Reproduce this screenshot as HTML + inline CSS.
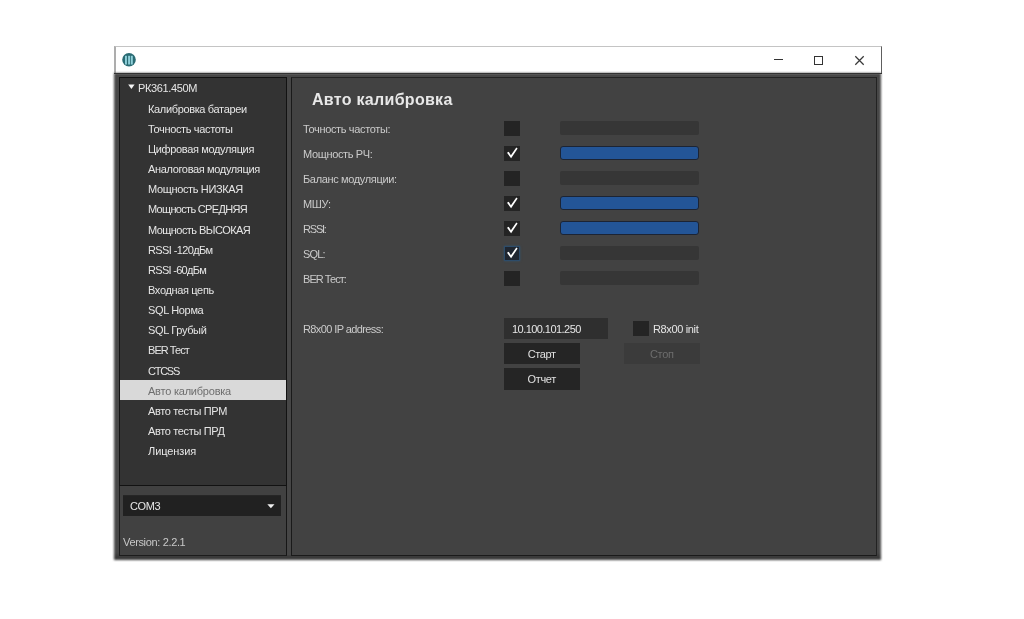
<!DOCTYPE html>
<html><head><meta charset="utf-8">
<style>
*{margin:0;padding:0;box-sizing:border-box}
html,body{width:1024px;height:619px;overflow:hidden;background:#fff;position:relative;font-family:"Liberation Sans",sans-serif}
.a{position:absolute}
.title{left:114px;top:46px;width:768px;height:27px;background:#fff;border-top:1.5px solid #c4c4c4;border-left:2px solid #adadad;border-right:1px solid #5e5e5e}
.frame{left:114px;top:73px;width:767px;height:487px;background:linear-gradient(#474747 0,#474747 480px,#3a3a3a 483px);filter:blur(0.9px)}
.ftop{left:114px;top:73px;width:768px;height:1px;background:#333}
.list{left:119px;top:77px;width:168px;height:409px;background:#333;border:1px solid #121212}
.lower{left:119px;top:486px;width:168px;height:70px;background:#414141;border-left:1px solid #1a1a1a;border-right:1px solid #161616;border-bottom:1px solid #1c1c1c}
.split{left:287px;top:77px;width:4px;height:478px;background:#464646}
.content{left:291px;top:77px;width:586px;height:479px;background:#424242;border-left:1px solid #1a1a1a;border-top:1px solid #242424;border-right:1px solid #222;border-bottom:1px solid #1a1a1a}
.t{color:#e6e6e6;font-size:11px;letter-spacing:-0.35px;white-space:nowrap;line-height:12px}
.item{left:148px}
.sel{left:120px;top:380px;width:166px;height:20px;background:#d9d9d9}
.lbl{left:303px;color:#cbcbcb}
.cb{width:15.5px;height:14.5px;background:#242424;left:504px}
.bar{left:560px;width:139px;height:14px;background:#363636;border-radius:2px}
.bar.f{background:#235597;border:1.5px solid #1c2434;border-radius:3px}
.btn{width:75.5px;height:20.5px;background:#252525;color:#e0e0e0;text-align:center;line-height:23px;font-size:11px;letter-spacing:-0.35px}
</style></head><body><div id="w" style="position:absolute;left:0;top:0;width:1024px;height:619px;will-change:transform">
<div class="a title"></div>
<!-- app icon -->
<svg class="a" style="left:121px;top:52px" width="16" height="16" viewBox="0 0 16 16">
<circle cx="8" cy="7.8" r="6.8" fill="#2a6b73"/>
<rect x="4" y="3.8" width="1.9" height="8.7" fill="#8fd0da"/>
<rect x="7.1" y="3.8" width="1.9" height="8.7" fill="#8fd0da"/>
<rect x="9.8" y="3.8" width="2" height="8.7" fill="#8fd0da"/>
</svg>
<!-- window controls -->
<div class="a" style="left:774px;top:59px;width:9px;height:1px;background:#333"></div>
<div class="a" style="left:814px;top:56px;width:9px;height:9px;border:1px solid #333"></div>
<svg class="a" style="left:854px;top:54.5px" width="11" height="11" viewBox="0 0 11 11"><path d="M1.3 1.3L9.7 9.7M9.7 1.3L1.3 9.7" stroke="#383838" stroke-width="1.25"/></svg>

<div class="a frame"></div>
<div class="a ftop"></div>
<div class="a list"></div>
<div class="a lower"></div>
<div class="a split"></div>
<div class="a content"></div>

<!-- sidebar tree -->
<svg class="a" style="left:128px;top:84px" width="7" height="6" viewBox="0 0 7 6"><path d="M0.2 0.6H6.6L3.4 5.1Z" fill="#f4f4f4"/></svg>
<div class="a t" style="left:138px;top:82px">РК361.450М</div>
<div class="a sel"></div>
<div class="a t item" style="top:102.6px">Калибровка батареи</div>
<div class="a t item" style="top:122.8px">Точность частоты</div>
<div class="a t item" style="top:142.9px">Цифровая модуляция</div>
<div class="a t item" style="top:163.0px">Аналоговая модуляция</div>
<div class="a t item" style="top:183.2px">Мощность НИЗКАЯ</div>
<div class="a t item" style="top:203.3px;letter-spacing:-0.68px">Мощность СРЕДНЯЯ</div>
<div class="a t item" style="top:223.5px;letter-spacing:-0.55px">Мощность ВЫСОКАЯ</div>
<div class="a t item" style="top:243.6px;letter-spacing:-0.62px">RSSI -120дБм</div>
<div class="a t item" style="top:263.8px;letter-spacing:-0.7px">RSSI -60дБм</div>
<div class="a t item" style="top:283.9px">Входная цепь</div>
<div class="a t item" style="top:304.1px">SQL Норма</div>
<div class="a t item" style="top:324.2px">SQL Грубый</div>
<div class="a t item" style="top:344.4px;letter-spacing:-0.95px">BER Тест</div>
<div class="a t item" style="top:364.5px;letter-spacing:-1.25px">CTCSS</div>
<div class="a t item" style="top:384.7px;color:#6e6e6e;letter-spacing:-0.22px">Авто калибровка</div>
<div class="a t item" style="top:404.9px">Авто тесты ПРМ</div>
<div class="a t item" style="top:425.0px">Авто тесты ПРД</div>
<div class="a t item" style="top:445.1px;letter-spacing:-0.08px">Лицензия</div>

<!-- combo -->
<div class="a" style="left:123px;top:495px;width:158px;height:21px;background:#212121;border-top:1px solid #262626"></div>
<div class="a t" style="left:130px;top:500px">COM3</div>
<svg class="a" style="left:267px;top:504px" width="8" height="5" viewBox="0 0 8 5"><path d="M0.3 0.2H7.5L3.9 4.3Z" fill="#f0f0f0"/></svg>
<div class="a t" style="left:123px;top:536px;color:#c8c8c8">Version: 2.2.1</div>

<!-- content -->
<div class="a t" style="left:312px;top:91px;font-size:16px;letter-spacing:0.3px;font-weight:bold;line-height:18px;color:#e8e8e8">Авто калибровка</div>

<div class="a t lbl" style="top:123px">Точность частоты:</div>
<div class="a t lbl" style="top:148px">Мощность РЧ:</div>
<div class="a t lbl" style="top:173px">Баланс модуляции:</div>
<div class="a t lbl" style="top:198px">МШУ:</div>
<div class="a t lbl" style="top:223px;letter-spacing:-1.2px">RSSI:</div>
<div class="a t lbl" style="top:248px;letter-spacing:-0.8px">SQL:</div>
<div class="a t lbl" style="top:273px;letter-spacing:-0.95px">BER Тест:</div>

<div class="a cb" style="top:121px"></div>
<div class="a cb" style="top:146px"></div>
<div class="a cb" style="top:171px"></div>
<div class="a cb" style="top:196px"></div>
<div class="a cb" style="top:221px"></div>
<div class="a cb" style="top:246px;background:#1f2630;border:1px solid #2d4c6a;box-shadow:0 0 2px #34546f"></div>
<div class="a cb" style="top:271px"></div>

<svg class="a" style="left:504px;top:146px" width="16" height="15" viewBox="0 0 16 15"><path d="M3 6.8L4.7 5.7L6.9 9.2L12.3 1.5L13.6 2.6L7.1 12.3Z" fill="#fff"/></svg>
<svg class="a" style="left:504px;top:196px" width="16" height="15" viewBox="0 0 16 15"><path d="M3 6.8L4.7 5.7L6.9 9.2L12.3 1.5L13.6 2.6L7.1 12.3Z" fill="#fff"/></svg>
<svg class="a" style="left:504px;top:221px" width="16" height="15" viewBox="0 0 16 15"><path d="M3 6.8L4.7 5.7L6.9 9.2L12.3 1.5L13.6 2.6L7.1 12.3Z" fill="#fff"/></svg>
<svg class="a" style="left:504px;top:246px" width="16" height="15" viewBox="0 0 16 15"><path d="M3 6.8L4.7 5.7L6.9 9.2L12.3 1.5L13.6 2.6L7.1 12.3Z" fill="#fff"/></svg>

<div class="a bar" style="top:121px"></div>
<div class="a bar f" style="top:146px"></div>
<div class="a bar" style="top:171px"></div>
<div class="a bar f" style="top:196px"></div>
<div class="a bar f" style="top:221px"></div>
<div class="a bar" style="top:246px"></div>
<div class="a bar" style="top:271px"></div>

<div class="a t lbl" style="top:323px;letter-spacing:-0.6px">R8x00 IP address:</div>
<div class="a" style="left:504px;top:318px;width:104px;height:21px;background:#2f2f2f"></div>
<div class="a t" style="left:512px;top:323px;letter-spacing:-0.55px">10.100.101.250</div>
<div class="a cb" style="left:633px;top:321px"></div>
<div class="a t" style="left:653px;top:323px">R8x00 init</div>

<div class="a btn" style="left:504px;top:343px">Старт</div>
<div class="a btn" style="left:624px;top:343px;background:#3b3b3b;color:#6d6d6d">Стоп</div>
<div class="a btn" style="left:504px;top:368px;height:21.5px;line-height:23.5px">Отчет</div>
</div></body></html>
